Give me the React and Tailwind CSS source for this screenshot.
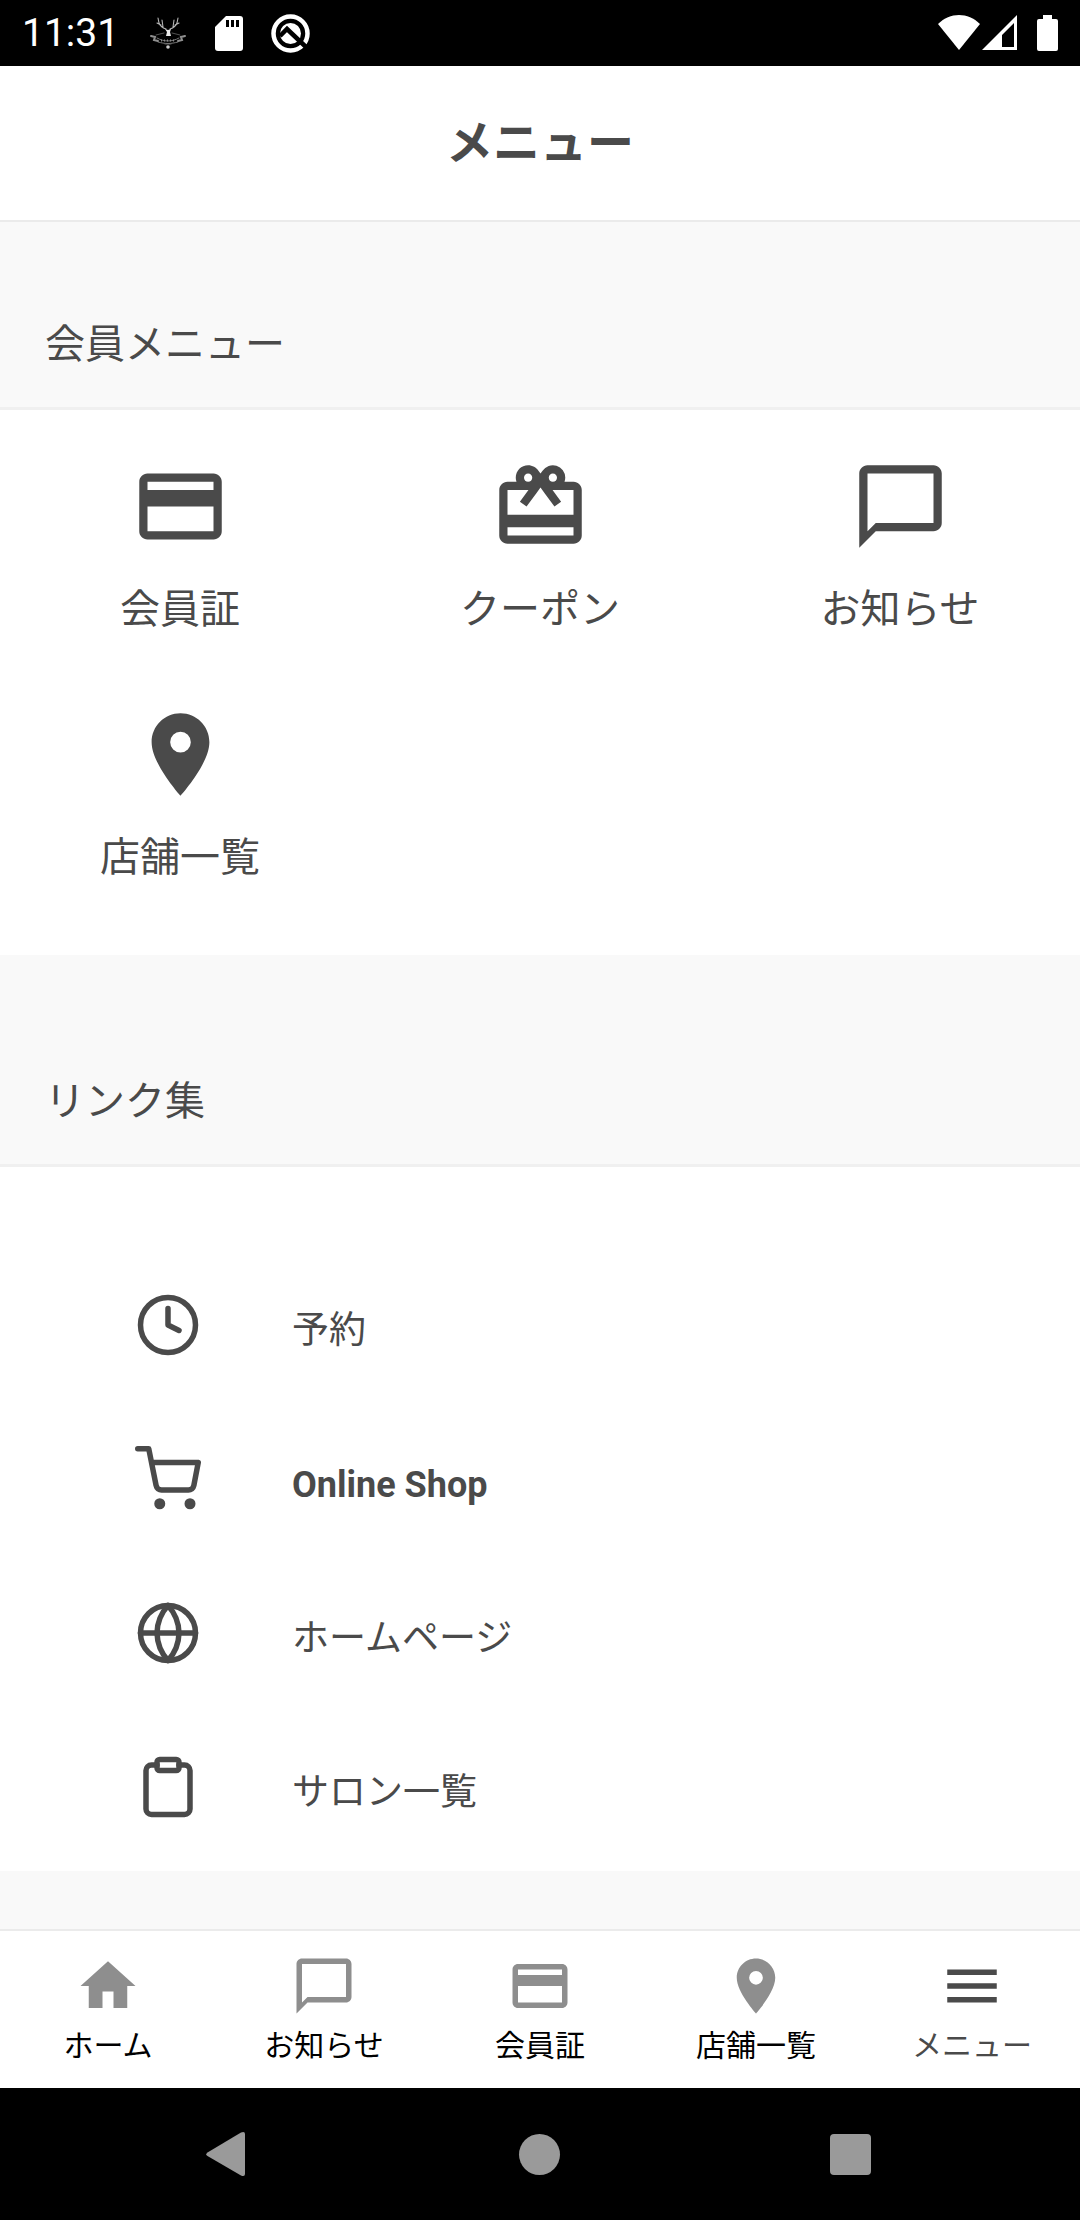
import { useState } from "react";
import {
  MdCardGiftcard,
  MdChatBubbleOutline,
  MdCreditCard,
  MdHome,
  MdMenu,
  MdPlace,
} from "react-icons/md";
import { FiClipboard, FiClock, FiGlobe, FiShoppingCart } from "react-icons/fi";

const memberItems = [
  { id: "card", label: "会員証", icon: MdCreditCard },
  { id: "coupon", label: "クーポン", icon: MdCardGiftcard },
  { id: "news", label: "お知らせ", icon: MdChatBubbleOutline },
  { id: "shops", label: "店舗一覧", icon: MdPlace },
];

const links = [
  { label: "予約", icon: FiClock },
  { label: "Online Shop", icon: FiShoppingCart, bold: true },
  { label: "ホームページ", icon: FiGlobe },
  { label: "サロン一覧", icon: FiClipboard },
];

const tabs = [
  { id: "home", label: "ホーム", icon: MdHome },
  { id: "news", label: "お知らせ", icon: MdChatBubbleOutline },
  { id: "card", label: "会員証", icon: MdCreditCard },
  { id: "shops", label: "店舗一覧", icon: MdPlace },
  { id: "menu", label: "メニュー", icon: MdMenu },
];

const StagIcon = () => (
  <svg width="38" height="34" viewBox="0 0 38 34" fill="none" stroke="#b5b5b5" strokeLinecap="round">
    <path
      d="M17 13c-3-1-6-3-7-6L9 2M12 9 8 7M14 11l-1-7M21 13c3-1 6-3 7-6l1-5M26 9l4-2M24 11l1-7"
      strokeWidth="1.1"
    />
    <path d="m16 13 3 1 3-1-1 3 1 4h-5l1-4z" fill="#e8e8e8" stroke="none" />
    <path d="M7 19l8-2M31 19l-8-2" stroke="#666" strokeWidth="0.8" />
    <path d="M8 22c7 4 15 4 22 0M9 26c7 2 13 2 20 0" stroke="#777" strokeWidth="1" />
    <path d="M12 24.500h14" stroke="#8a8a8a" strokeWidth="2" strokeDasharray="1 2" strokeLinecap="butt" />
    <path d="m2 20 4 1-1 3 4 1M36 20l-4 1 1 3-4 1" strokeWidth="2" stroke="#8f8f8f" />
    <path d="M16 28h6" stroke="#777" strokeWidth="0.8" />
    <circle cx="19" cy="31" r="1.800" fill="#ccc" stroke="none" />
  </svg>
);

const SdCardIcon = () => (
  <svg width="28" height="35" viewBox="0 0 28 35">
    <path d="M11 0h14a3 3 0 0 1 3 3v29a3 3 0 0 1-3 3H3a3 3 0 0 1-3-3V11z" fill="#fff" />
    <path d="M11 4h3v7h-3zM16 4h3v7h-3zM21 4h3v7h-3z" fill="#000" />
  </svg>
);

const RingIcon = () => (
  <svg width="39" height="39" viewBox="0 0 39 39" fill="none">
    <circle cx="19.500" cy="19.500" r="17" stroke="#fff" strokeWidth="4.500" />
    <circle cx="19.500" cy="19.500" r="10.500" fill="#fff" />
    <path d="m9 22 7-7 19 18" stroke="#000" strokeWidth="4.500" />
  </svg>
);

const StatusBar = () => (
  <div className="flex h-[66px] items-center justify-between bg-black px-[22px] text-white">
    <div className="flex items-center">
      <span className="text-[39px] leading-[46px]">11:31</span>
      <span className="ml-[30px] flex items-center gap-7">
        <StagIcon />
        <SdCardIcon />
        <RingIcon />
      </span>
    </div>
    <div className="flex items-center">
      <svg width="42" height="36" viewBox="0 0 42 36" fill="#fff">
        <path d="M21 35 0 9C12-3 30-3 42 9z" />
      </svg>
      <svg className="ml-[2px]" width="36" height="36" viewBox="0 0 36 36" fill="#fff">
        <path fillRule="evenodd" d="M35 0v35H0zM32 8 20 20v12h12z" />
      </svg>
      <svg className="ml-[19px]" width="21" height="36" viewBox="0 0 21 36" fill="#fff">
        <path d="M6 0h9v4h4a2 2 0 0 1 2 2v28a2 2 0 0 1-2 2H2a2 2 0 0 1-2-2V6a2 2 0 0 1 2-2h4z" />
      </svg>
    </div>
  </div>
);

const SectionTitle = ({ children }) => (
  <h2 className="border-b-[3px] border-[#f0f0f0] px-[45px] pt-[93px] pb-8 text-[40px] leading-[60px]">
    {children}
  </h2>
);

const TabBar = ({ active, onChange }) => (
  <nav className="grid h-[159px] grid-cols-5 border-t-2 border-[#ebebeb] bg-white">
    {tabs.map(({ id, label, icon: Icon }) => (
      <button
        key={id}
        type="button"
        onClick={() => onChange(id)}
        className={`flex flex-col items-center pt-[22px] ${
          id === active ? "text-[#4a4a4a]" : "text-black"
        }`}
      >
        <Icon size={66} className={id === active ? "text-[#4a4a4a]" : "text-[#8e8e8e]"} />
        <span className="mt-[5px] text-[30px] leading-[44px]">{label}</span>
      </button>
    ))}
  </nav>
);

const SystemBar = () => (
  <div className="grid h-[132px] grid-cols-3 bg-black px-[74px] text-[#9a9a9a]">
    <button type="button" aria-label="戻る" className="flex items-center justify-center">
      <svg width="46" height="46" viewBox="0 0 46 46" fill="currentColor">
        <path d="M1.500 21.500 35 1.500Q39 0 39 3v40q0 3-4 1.500L1.500 25q-2.500-1.750 0-3.500z" />
      </svg>
    </button>
    <button type="button" aria-label="ホーム画面" className="flex items-center justify-center">
      <span className="size-[41px] rounded-full bg-[#9a9a9a]" />
    </button>
    <button type="button" aria-label="履歴" className="flex items-center justify-center">
      <span className="size-[41px] rounded bg-[#9a9a9a]" />
    </button>
  </div>
);

const App = () => {
  const [activeTab, setActiveTab] = useState("menu");

  return (
    <div
      lang="ja"
      className="flex min-h-screen flex-col bg-[#f9f9f9] font-['Roboto','Noto_Sans_CJK_JP',sans-serif] text-[#4a4a4a]"
    >
      <StatusBar />

      <header className="flex h-[156px] items-center justify-center border-b-2 border-[#ebebeb] bg-white">
        <h1 className="text-[47px] leading-[68px] font-bold">メニュー</h1>
      </header>

      <main className="flex-1">
        {/* Member menu */}
        <section>
          <SectionTitle>会員メニュー</SectionTitle>
          <div className="grid grid-cols-3 bg-white pt-[47px] pb-[2px]">
            {memberItems.map(({ id, label, icon: Icon }) => (
              <button
                key={id}
                type="button"
                onClick={() => setActiveTab(id)}
                className="flex h-[248px] flex-col items-center"
              >
                <Icon size={99} />
                <span className="mt-6 text-[40px] leading-[60px]">{label}</span>
              </button>
            ))}
          </div>
        </section>

        {/* External links */}
        <section className="pt-6">
          <SectionTitle>リンク集</SectionTitle>
          <ul className="bg-white pt-[81px] pb-[7px]">
            {links.map(({ label, icon: Icon, bold }) => (
              <li key={label}>
                <a href="#" className="flex h-[154px] items-center gap-[91px] pl-[135px]">
                  <Icon size={66} />
                  <span
                    className={`pt-3 leading-[54px] ${bold ? "text-[36px] font-bold" : "text-[37px]"}`}
                  >
                    {label}
                  </span>
                </a>
              </li>
            ))}
          </ul>
        </section>
      </main>

      <TabBar active={activeTab} onChange={setActiveTab} />
      <SystemBar />
    </div>
  );
};

export default App;
